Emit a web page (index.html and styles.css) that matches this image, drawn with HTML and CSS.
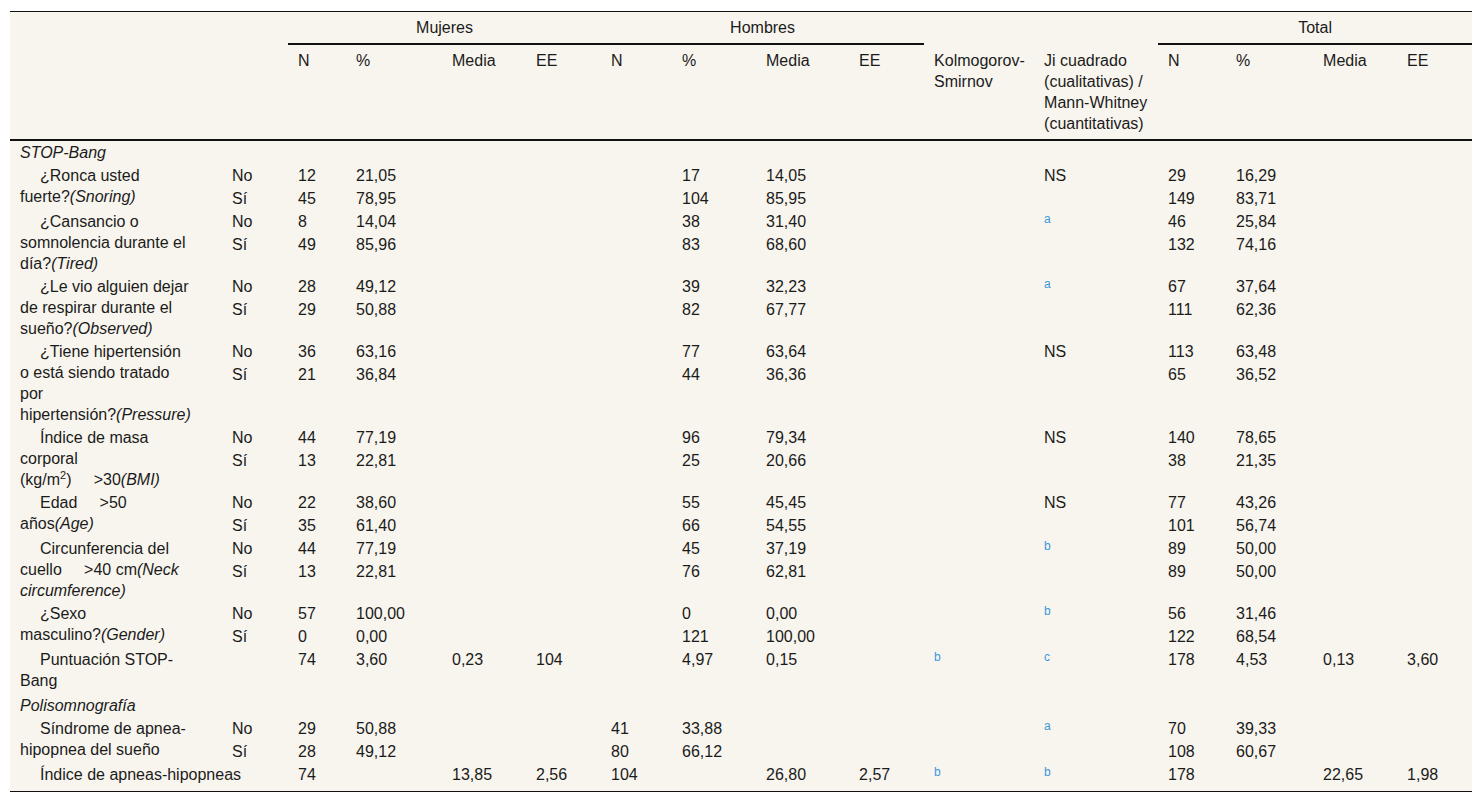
FILE: index.html
```html
<!DOCTYPE html>
<html lang="es">
<head>
<meta charset="utf-8">
<title>STOP-Bang y polisomnografía</title>
<link rel="stylesheet" href="styles.css">
</head>
<body>
<div class="page">
<table class="t">
<colgroup>
<col class="w-lbl"><col class="w-cat">
<col class="w-mn"><col class="w-mp"><col class="w-mm"><col class="w-me">
<col class="w-hn"><col class="w-hp"><col class="w-hm"><col class="w-he">
<col class="w-ks"><col class="w-ji">
<col class="w-tn"><col class="w-tp"><col class="w-tm"><col class="w-te">
</colgroup>
<thead>
<tr class="h1">
<th class="corner" colspan="2" rowspan="2"></th>
<th class="grp" colspan="4">Mujeres</th>
<th class="grp" colspan="4">Hombres</th>
<th></th><th></th>
<th class="grp" colspan="4">Total</th>
</tr>
<tr class="h2">
<th>N</th><th>%</th><th>Media</th><th>EE</th>
<th>N</th><th>%</th><th>Media</th><th>EE</th>
<th>Kolmogorov-Smirnov</th>
<th>Ji cuadrado (cualitativas) / Mann-Whitney (cuantitativas)</th>
<th>N</th><th>%</th><th>Media</th><th>EE</th>
</tr>
</thead>
<tbody>
<tr class="one">
<td class="lbl sec" colspan="2">STOP-Bang</td>
<td></td><td></td><td></td><td></td><td></td><td></td><td></td><td></td><td></td><td></td><td></td><td></td><td></td><td></td>
</tr>

<tr class="one">
<td class="lbl sub" rowspan="2">¿Ronca usted <span class="nw">fuerte?<i>(Snoring)</i></span></td>
<td>No</td><td>12</td><td>21,05</td><td></td><td></td>
<td></td><td>17</td><td>14,05</td><td></td>
<td></td><td>NS</td>
<td>29</td><td>16,29</td><td></td><td></td>
</tr>
<tr>
<td>Sí</td><td>45</td><td>78,95</td><td></td><td></td>
<td></td><td>104</td><td>85,95</td><td></td>
<td></td><td></td>
<td>149</td><td>83,71</td><td></td><td></td>
</tr>

<tr class="one">
<td class="lbl sub" rowspan="2">¿Cansancio o somnolencia durante el <span class="nw">día?<i>(Tired)</i></span></td>
<td>No</td><td>8</td><td>14,04</td><td></td><td></td>
<td></td><td>38</td><td>31,40</td><td></td>
<td></td><td><sup class="n">a</sup></td>
<td>46</td><td>25,84</td><td></td><td></td>
</tr>
<tr>
<td>Sí</td><td>49</td><td>85,96</td><td></td><td></td>
<td></td><td>83</td><td>68,60</td><td></td>
<td></td><td></td>
<td>132</td><td>74,16</td><td></td><td></td>
</tr>

<tr class="one">
<td class="lbl sub" rowspan="2">¿Le vio alguien dejar de respirar durante el <span class="nw">sueño?<i>(Observed)</i></span></td>
<td>No</td><td>28</td><td>49,12</td><td></td><td></td>
<td></td><td>39</td><td>32,23</td><td></td>
<td></td><td><sup class="n">a</sup></td>
<td>67</td><td>37,64</td><td></td><td></td>
</tr>
<tr>
<td>Sí</td><td>29</td><td>50,88</td><td></td><td></td>
<td></td><td>82</td><td>67,77</td><td></td>
<td></td><td></td>
<td>111</td><td>62,36</td><td></td><td></td>
</tr>

<tr class="one">
<td class="lbl sub" rowspan="2">¿Tiene hipertensión o está siendo tratado por <span class="nw">hipertensión?<i>(Pressure)</i></span></td>
<td>No</td><td>36</td><td>63,16</td><td></td><td></td>
<td></td><td>77</td><td>63,64</td><td></td>
<td></td><td>NS</td>
<td>113</td><td>63,48</td><td></td><td></td>
</tr>
<tr>
<td>Sí</td><td>21</td><td>36,84</td><td></td><td></td>
<td></td><td>44</td><td>36,36</td><td></td>
<td></td><td></td>
<td>65</td><td>36,52</td><td></td><td></td>
</tr>

<tr class="one">
<td class="lbl sub" rowspan="2">Índice de masa corporal <span class="nw">(kg/m<sup class="exp">2</sup>)&nbsp;&nbsp;&nbsp;&nbsp;&nbsp;&gt;30<i>(BMI)</i></span></td>
<td>No</td><td>44</td><td>77,19</td><td></td><td></td>
<td></td><td>96</td><td>79,34</td><td></td>
<td></td><td>NS</td>
<td>140</td><td>78,65</td><td></td><td></td>
</tr>
<tr>
<td>Sí</td><td>13</td><td>22,81</td><td></td><td></td>
<td></td><td>25</td><td>20,66</td><td></td>
<td></td><td></td>
<td>38</td><td>21,35</td><td></td><td></td>
</tr>

<tr class="one">
<td class="lbl sub" rowspan="2">Edad&nbsp;&nbsp;&nbsp;&nbsp;&nbsp;&gt;50 <span class="nw">años<i>(Age)</i></span></td>
<td>No</td><td>22</td><td>38,60</td><td></td><td></td>
<td></td><td>55</td><td>45,45</td><td></td>
<td></td><td>NS</td>
<td>77</td><td>43,26</td><td></td><td></td>
</tr>
<tr>
<td>Sí</td><td>35</td><td>61,40</td><td></td><td></td>
<td></td><td>66</td><td>54,55</td><td></td>
<td></td><td></td>
<td>101</td><td>56,74</td><td></td><td></td>
</tr>

<tr class="one">
<td class="lbl sub" rowspan="2">Circunferencia del cuello&nbsp;&nbsp;&nbsp;&nbsp;&nbsp;&gt;40 <span class="nw">cm<i>(Neck</i></span> <i>circumference)</i></td>
<td>No</td><td>44</td><td>77,19</td><td></td><td></td>
<td></td><td>45</td><td>37,19</td><td></td>
<td></td><td><sup class="n">b</sup></td>
<td>89</td><td>50,00</td><td></td><td></td>
</tr>
<tr>
<td>Sí</td><td>13</td><td>22,81</td><td></td><td></td>
<td></td><td>76</td><td>62,81</td><td></td>
<td></td><td></td>
<td>89</td><td>50,00</td><td></td><td></td>
</tr>

<tr class="one">
<td class="lbl sub" rowspan="2">¿Sexo <span class="nw">masculino?<i>(Gender)</i></span></td>
<td>No</td><td>57</td><td>100,00</td><td></td><td></td>
<td></td><td>0</td><td>0,00</td><td></td>
<td></td><td><sup class="n">b</sup></td>
<td>56</td><td>31,46</td><td></td><td></td>
</tr>
<tr>
<td>Sí</td><td>0</td><td>0,00</td><td></td><td></td>
<td></td><td>121</td><td>100,00</td><td></td>
<td></td><td></td>
<td>122</td><td>68,54</td><td></td><td></td>
</tr>

<tr class="tall">
<td class="lbl sub">Puntuación STOP-Bang</td>
<td></td><td>74</td><td>3,60</td><td>0,23</td><td>104</td>
<td></td><td>4,97</td><td>0,15</td><td></td>
<td><sup class="n">b</sup></td><td><sup class="n">c</sup></td>
<td>178</td><td>4,53</td><td>0,13</td><td>3,60</td>
</tr>

<tr class="one">
<td class="lbl sec" colspan="2">Polisomnografía</td>
<td></td><td></td><td></td><td></td><td></td><td></td><td></td><td></td><td></td><td></td><td></td><td></td><td></td><td></td>
</tr>

<tr class="one">
<td class="lbl sub" rowspan="2">Síndrome de apnea-hipopnea del sueño</td>
<td>No</td><td>29</td><td>50,88</td><td></td><td></td>
<td>41</td><td>33,88</td><td></td><td></td>
<td></td><td><sup class="n">a</sup></td>
<td>70</td><td>39,33</td><td></td><td></td>
</tr>
<tr>
<td>Sí</td><td>28</td><td>49,12</td><td></td><td></td>
<td>80</td><td>66,12</td><td></td><td></td>
<td></td><td></td>
<td>108</td><td>60,67</td><td></td><td></td>
</tr>

<tr class="last">
<td class="lbl sub" colspan="2">Índice de apneas-hipopneas</td>
<td>74</td><td></td><td>13,85</td><td>2,56</td>
<td>104</td><td></td><td>26,80</td><td>2,57</td>
<td><sup class="n">b</sup></td><td><sup class="n">b</sup></td>
<td>178</td><td></td><td>22,65</td><td>1,98</td>
</tr>
</tbody>
</table>
</div>
</body>
</html>
```

FILE: styles.css
```css
html, body {
  margin: 0;
  padding: 0;
  background: #ffffff;
}

body {
  font-family: "Liberation Sans", Arial, Helvetica, sans-serif;
  color: #1b1b1b;
}

.page {
  padding: 11px 11px 11px 10px;
}

.t {
  border-collapse: separate;
  border-spacing: 0;
  table-layout: fixed;
  width: 1462px;
  background: #f8f5ee;
  border-top: 1px solid #111111;
  border-bottom: 1px solid #111111;
  font-size: 16px;
  line-height: 21px;
}

.w-lbl { width: 212px; }
.w-cat { width: 66px; }
.w-mn { width: 58px; }
.w-mp { width: 96px; }
.w-mm { width: 84px; }
.w-me { width: 75px; }
.w-hn { width: 71px; }
.w-hp { width: 84px; }
.w-hm { width: 93px; }
.w-he { width: 75px; }
.w-ks { width: 110px; }
.w-ji { width: 124px; }
.w-tn { width: 68px; }
.w-tp { width: 87px; }
.w-tm { width: 84px; }
.w-te { width: 75px; }

.t th,
.t td {
  padding: 1px 5px 1px 10px;
  text-align: left;
  vertical-align: top;
  font-weight: normal;
}

.t thead th {
  padding-top: 5px;
  padding-bottom: 5px;
}

.t .grp {
  text-align: center;
  padding-left: 0;
  padding-right: 0;
  border-bottom: 2px solid #111111;
}

.t .h2 th,
.t .corner {
  border-bottom: 2px solid #111111;
}

.t .lbl {
  padding-right: 30px;
}

.t .sub {
  text-indent: 20px;
}

.t .sec {
  font-style: italic;
}

.t i {
  font-style: italic;
}

.nw {
  white-space: nowrap;
}

.one {
  height: 23px;
}

.tall td {
  padding-bottom: 3px;
}

.last td {
  padding-bottom: 6px;
}

.n {
  color: #3a97dc;
  font-size: 12px;
  line-height: 0;
  vertical-align: 4px;
}

.exp {
  font-size: 11px;
  line-height: 0;
  vertical-align: super;
}
```
